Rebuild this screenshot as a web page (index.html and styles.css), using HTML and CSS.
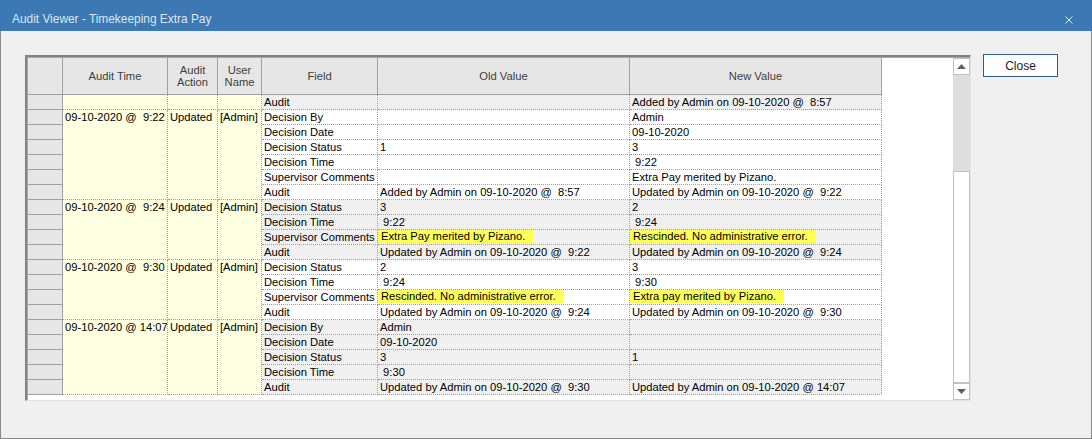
FILE: index.html
```html
<!DOCTYPE html>
<html lang="en">
<head>
<meta charset="utf-8">
<title>Audit Viewer - Timekeeping Extra Pay</title>
<link rel="stylesheet" href="styles.css">
</head>
<body>
<div class="window">
  <div class="titlebar">
    <div class="title">Audit Viewer - Timekeeping Extra Pay</div>
    <div class="xbtn"><svg width="10" height="10" viewBox="0 0 10 10"><path d="M1.5 1.5 L8.5 8.5 M8.5 1.5 L1.5 8.5" stroke="#dde6ef" stroke-width="1" fill="none"/></svg></div>
  </div>
  <div class="client">
    <div class="frame">
      <div class="frame-inner">
        <div class="table-area">
          <div class="grid">
            <div class="hc"></div>
            <div class="hc">Audit Time</div>
            <div class="hc">Audit<br>Action</div>
            <div class="hc">User<br>Name</div>
            <div class="hc">Field</div>
            <div class="hc">Old Value</div>
            <div class="hc">New Value</div>
            <div class="hf"></div>

            <!-- group 0 (tail of earlier entry) -->
            <div class="rh"></div>
            <div class="y s1"></div><div class="y s1"></div><div class="y s1"></div>
            <div class="c alt">Audit</div><div class="c alt"></div><div class="c alt">Added by Admin on 09-10-2020 @  8:57</div>
            <div class="f"></div>

            <!-- group 1 -->
            <div class="rh"></div>
            <div class="y s6">09-10-2020 @  9:22</div><div class="y s6">Updated</div><div class="y s6">[Admin]</div>
            <div class="c">Decision By</div><div class="c"></div><div class="c">Admin</div><div class="f"></div>
            <div class="rh"></div>
            <div class="c">Decision Date</div><div class="c"></div><div class="c">09-10-2020</div><div class="f"></div>
            <div class="rh"></div>
            <div class="c">Decision Status</div><div class="c">1</div><div class="c">3</div><div class="f"></div>
            <div class="rh"></div>
            <div class="c">Decision Time</div><div class="c"></div><div class="c"> 9:22</div><div class="f"></div>
            <div class="rh"></div>
            <div class="c">Supervisor Comments</div><div class="c"></div><div class="c">Extra Pay merited by Pizano.</div><div class="f"></div>
            <div class="rh"></div>
            <div class="c">Audit</div><div class="c">Added by Admin on 09-10-2020 @  8:57</div><div class="c">Updated by Admin on 09-10-2020 @  9:22</div><div class="f"></div>

            <!-- group 2 -->
            <div class="rh"></div>
            <div class="y s4">09-10-2020 @  9:24</div><div class="y s4">Updated</div><div class="y s4">[Admin]</div>
            <div class="c alt">Decision Status</div><div class="c alt">3</div><div class="c alt">2</div><div class="f"></div>
            <div class="rh"></div>
            <div class="c alt">Decision Time</div><div class="c alt"> 9:22</div><div class="c alt"> 9:24</div><div class="f"></div>
            <div class="rh"></div>
            <div class="c alt">Supervisor Comments</div><div class="c alt"><span class="hl">Extra Pay merited by Pizano.</span></div><div class="c alt"><span class="hl">Rescinded. No administrative error.</span></div><div class="f"></div>
            <div class="rh"></div>
            <div class="c alt">Audit</div><div class="c alt">Updated by Admin on 09-10-2020 @  9:22</div><div class="c alt">Updated by Admin on 09-10-2020 @  9:24</div><div class="f"></div>

            <!-- group 3 -->
            <div class="rh"></div>
            <div class="y s4">09-10-2020 @  9:30</div><div class="y s4">Updated</div><div class="y s4">[Admin]</div>
            <div class="c">Decision Status</div><div class="c">2</div><div class="c">3</div><div class="f"></div>
            <div class="rh"></div>
            <div class="c">Decision Time</div><div class="c"> 9:24</div><div class="c"> 9:30</div><div class="f"></div>
            <div class="rh"></div>
            <div class="c">Supervisor Comments</div><div class="c"><span class="hl">Rescinded. No administrative error.</span></div><div class="c"><span class="hl">Extra pay merited by Pizano.</span></div><div class="f"></div>
            <div class="rh"></div>
            <div class="c">Audit</div><div class="c">Updated by Admin on 09-10-2020 @  9:24</div><div class="c">Updated by Admin on 09-10-2020 @  9:30</div><div class="f"></div>

            <!-- group 4 -->
            <div class="rh"></div>
            <div class="y s5">09-10-2020 @ 14:07</div><div class="y s5">Updated</div><div class="y s5">[Admin]</div>
            <div class="c alt">Decision By</div><div class="c alt">Admin</div><div class="c alt"></div><div class="f"></div>
            <div class="rh"></div>
            <div class="c alt">Decision Date</div><div class="c alt">09-10-2020</div><div class="c alt"></div><div class="f"></div>
            <div class="rh"></div>
            <div class="c alt">Decision Status</div><div class="c alt">3</div><div class="c alt">1</div><div class="f"></div>
            <div class="rh"></div>
            <div class="c alt">Decision Time</div><div class="c alt"> 9:30</div><div class="c alt"></div><div class="f"></div>
            <div class="rh"></div>
            <div class="c alt">Audit</div><div class="c alt">Updated by Admin on 09-10-2020 @  9:30</div><div class="c alt">Updated by Admin on 09-10-2020 @ 14:07</div><div class="f"></div>
          </div>
        </div>
        <div class="scrollbar">
          <div class="sb-btn"><svg width="9" height="5" viewBox="0 0 9 5"><polygon points="0,5 4.5,0 9,5" fill="#606060"/></svg></div>
          <div class="sb-track"></div>
          <div class="sb-thumb"></div>
          <div class="sb-btn"><svg width="9" height="5" viewBox="0 0 9 5"><polygon points="0,0 9,0 4.5,5" fill="#606060"/></svg></div>
        </div>
      </div>
    </div>
    <button class="btn" type="button">Close</button>
  </div>
</div>
</body>
</html>
```

FILE: styles.css
```css
* { box-sizing: border-box; }
html, body { margin: 0; padding: 0; }
body {
  width: 1092px;
  height: 439px;
  overflow: hidden;
  background: #f0f0f0;
  font-family: "Liberation Sans", Arial, sans-serif;
  font-size: 11.2px;
  color: #000;
}
.window {
  width: 1092px;
  height: 439px;
  display: flex;
  flex-direction: column;
}
.titlebar {
  height: 31px;
  flex: none;
  background: #3c78b4;
  display: flex;
  justify-content: space-between;
  align-items: flex-start;
  color: #dde6ef;
}
.title {
  padding: 12px 0 0 12px;
  line-height: 14px;
  font-size: 11.9px;
}
.xbtn {
  width: 46px;
  height: 31px;
  padding-top: 8px;
  display: flex;
  align-items: center;
  justify-content: center;
}
.client {
  flex: 1;
  border: 1px solid #8a8a8a;
  border-top: none;
  padding: 24px 33px 0 24px;
  display: flex;
  align-items: flex-start;
  gap: 12px;
}
.frame {
  width: 946px;
  height: 346px;
  flex: none;
  border-top: 2px solid #828282;
  border-left: 2px solid #828282;
  border-right: 1px solid #e3e3e3;
  border-bottom: 1px solid #e3e3e3;
}
.frame-inner {
  width: 943px;
  height: 343px;
  border-top: 1px solid #a8a8a8;
  border-left: 1px solid #a8a8a8;
  display: flex;
  background: #fff;
}
.table-area {
  width: 925px;
  height: 342px;
  background: #fff;
  overflow: hidden;
}
.grid {
  display: grid;
  grid-template-columns: 35px 105px 50px 44px 116px 252px 252px 71px;
  grid-template-rows: 37px;
  grid-auto-rows: 15px;
}
.hc {
  background: #e6e6e6;
  border-right: 1px solid #a0a0a0;
  border-bottom: 1px solid #a0a0a0;
  color: #404040;
  display: flex;
  align-items: center;
  justify-content: center;
  text-align: center;
  line-height: 12.5px;
}
.hf { background: #fff; }
.rh {
  background: #e6e6e6;
  border-right: 1px solid #a0a0a0;
  border-bottom: 1px solid #a0a0a0;
}
.y, .c {
  border-right: 1px dotted #a0a0a0;
  border-bottom: 1px dotted #a0a0a0;
  padding-left: 2px;
  line-height: 14px;
  white-space: pre;
  overflow: hidden;
}
.y { background: #ffffe1; }
.c { background: #fff; }
.c.alt { background: #f0f0f0; }
.s1 { grid-row: span 1; }
.s4 { grid-row: span 4; }
.s5 { grid-row: span 5; }
.s6 { grid-row: span 6; }
.f { background: #fff; }
.hl {
  display: inline-block;
  vertical-align: top;
  height: 13px;
  line-height: 13px;
  background: #ffff5a;
  margin-left: -2px;
  padding: 0 8px 0 3px;
}
.scrollbar {
  width: 17px;
  height: 342px;
  display: flex;
  flex-direction: column;
  background: #dedede;
}
.sb-btn {
  width: 17px;
  height: 17px;
  flex: none;
  background: #fff;
  border: 1px solid #c2c2c2;
  display: flex;
  align-items: center;
  justify-content: center;
}
.sb-track {
  height: 96px;
  flex: none;
  background: #dedede;
}
.sb-thumb {
  height: 212px;
  flex: none;
  background: #fff;
  border: 1px solid #c2c2c2;
}
.btn {
  width: 75px;
  height: 23px;
  margin-top: -1px;
  flex: none;
  background: #fdfdfd;
  border: 1px solid #2e5d8c;
  border-radius: 0;
  font-family: "Liberation Sans", Arial, sans-serif;
  font-size: 12px;
  color: #1e1e1e;
  padding: 0;
}
```
